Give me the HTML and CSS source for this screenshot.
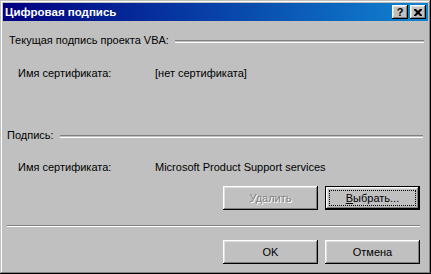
FILE: index.html
```html
<!DOCTYPE html>
<html lang="ru">
<head>
<meta charset="utf-8">
<link rel="stylesheet" href="styles.css">
</head>
<body>
<div class="window">
  <div class="titlebar">
    <span class="title">Цифровая подпись</span>
    <div class="caption-buttons">
      <span class="cap-btn"><span class="cap-q">?</span></span>
      <span class="cap-btn cap-gap">
        <svg width="8" height="7" viewBox="0 0 8 7"><path d="M0 0h2l2 2 2-2h2v1l-2.5 2.5L8 6v1H6L4 5 2 7H0V6l2.5-2.5L0 1z" fill="#000"/></svg>
      </span>
    </div>
  </div>
  <div class="client">
    <div class="group-head g1"><span>Текущая подпись проекта VBA:</span><span class="etch"></span></div>
    <div class="field f1"><span class="label">Имя сертификата:</span><span class="value">[нет сертификата]</span></div>
    <div class="group-head g2"><span>Подпись:</span><span class="etch"></span></div>
    <div class="field f2"><span class="label">Имя сертификата:</span><span class="value">Microsoft Product Support services</span></div>
    <div class="btn-row r1">
      <span class="btn disabled">Удалить</span>
      <span class="btn default"><span class="focus"><u>В</u>ыбрать...</span></span>
    </div>
    <div class="separator"></div>
    <div class="btn-row r2">
      <span class="btn">OK</span>
      <span class="btn">Отмена</span>
    </div>
  </div>
</div>
</body>
</html>
```
FILE: styles.css
```css
html, body { margin: 0; padding: 0; }
body {
  width: 431px;
  height: 274px;
  font-family: "Liberation Sans", Arial, sans-serif;
  font-size: 11px;
  color: #000;
  background: #c0c0c0;
}
.window {
  width: 431px;
  height: 274px;
  box-sizing: border-box;
  padding: 3px;
  background: #c0c0c0;
  box-shadow: inset -1px -1px #000, inset 1px 1px #c0c0c0, inset -2px -2px #808080, inset 2px 2px #fff;
  display: flex;
  flex-direction: column;
}
.titlebar {
  height: 18px;
  background: linear-gradient(to right, #000080, #1084d0);
  display: flex;
  align-items: center;
  justify-content: space-between;
  padding: 0 2px 0 2px;
}
.title {
  color: #fff;
  font-weight: bold;
  font-size: 11.5px;
}
.caption-buttons { display: flex; }
.cap-btn {
  width: 16px;
  height: 14px;
  box-sizing: border-box;
  background: #c0c0c0;
  box-shadow: inset -1px -1px #000, inset 1px 1px #fff, inset -2px -2px #808080, inset 2px 2px #dfdfdf;
  display: flex;
  align-items: center;
  justify-content: center;
}
.cap-gap { margin-left: 2px; }
.cap-q {
  font-weight: bold;
  font-size: 11px;
  line-height: 1;
  margin-top: 1px;
}
.client {
  flex: 1;
  padding: 0 4px 0 4px;
  display: flex;
  flex-direction: column;
}
.group-head {
  display: flex;
  align-items: center;
  height: 13px;
  line-height: 13px;
}
.etch {
  flex: 1;
  height: 1px;
  border-top: 1px solid #808080;
  border-bottom: 1px solid #fff;
  margin-left: 5px;
  margin-top: 2px;
}
.g1 { margin-top: 13px; padding-left: 2px; }
.g2 { margin-top: 49px; }
.g1 .etch { margin-left: 6px; }
.g2 .etch { margin-left: 6px; margin-right: 1px; }
.field {
  display: grid;
  grid-template-columns: 137px auto;
  height: 13px;
  line-height: 13px;
  padding-left: 11px;
}
.f1 { margin-top: 20px; }
.f2 { margin-top: 19px; }
.btn-row {
  display: flex;
  justify-content: flex-end;
  gap: 7px;
  padding-right: 4px;
}
.r1 { margin-top: 12px; }
.r2 { margin-top: 13px; }
.btn {
  width: 95px;
  height: 24px;
  box-sizing: border-box;
  background: #c0c0c0;
  box-shadow: inset -1px -1px #000, inset 1px 1px #fff, inset -2px -2px #808080, inset 2px 2px #dfdfdf;
  display: flex;
  align-items: center;
  justify-content: center;
}
.btn.disabled {
  color: #808080;
  text-shadow: 1px 1px 0 #fff;
}
.btn.default {
  box-shadow: inset 0 0 0 1px #000, inset -2px -2px #000, inset 2px 2px #fff, inset -3px -3px #808080, inset 3px 3px #dfdfdf;
}
.focus {
  display: flex;
  align-items: center;
  justify-content: center;
  width: 85px;
  height: 14px;
  outline: 1px dotted #000;
}
.separator {
  margin-top: 15px;
  margin-right: 4px;
  height: 0;
  border-top: 1px solid #808080;
  border-bottom: 1px solid #fff;
}
```
